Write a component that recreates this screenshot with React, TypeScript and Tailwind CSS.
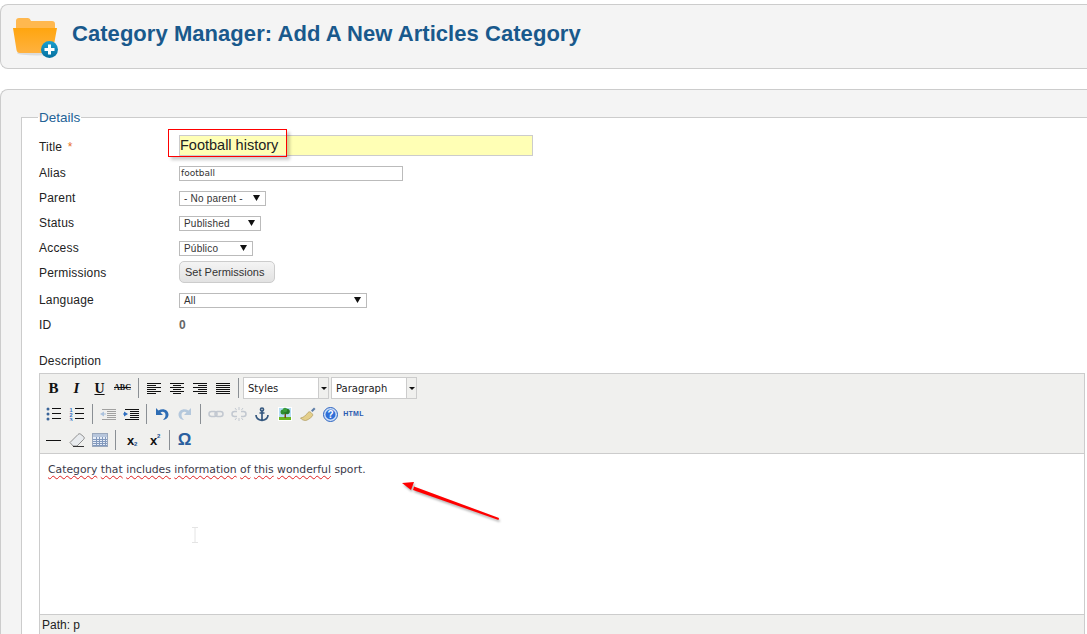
import type { ReactNode } from "react";

const sans = "font-['Liberation_Sans',Arial,sans-serif]";
const serif = "font-['Liberation_Serif',serif]";
const verdana = "font-['DejaVu_Sans',Verdana,sans-serif]";

function FolderIcon() {
  return (
    <svg width="48" height="44" viewBox="0 0 48 44" className="shrink-0">
      <defs>
        <linearGradient id="folderFront" x1="0" y1="0" x2="0" y2="1">
          <stop offset="0" stopColor="#ffa50f" />
          <stop offset="1" stopColor="#ffb23f" />
        </linearGradient>
        <linearGradient id="badge" x1="0" y1="0" x2="0" y2="1">
          <stop offset="0" stopColor="#1aa0d0" />
          <stop offset="1" stopColor="#05709f" />
        </linearGradient>
      </defs>
      <ellipse cx="25" cy="38" rx="20" ry="2.5" fill="#dcdcdc" />
      <path d="M4 6 q0-3 3-3 h9 q2 0 3 3 h21 q3 0 3 3 v5 H4z" fill="#ffb84f" />
      <path d="M1 13 h44 l-4 22 q-.5 3-3 3 H8 q-3 0-3.5-3z" fill="url(#folderFront)" />
      <circle cx="37.5" cy="34.5" r="8.5" fill="url(#badge)" />
      <path d="M36 29.5 h3 v3.5 h3.5 v3 H39 v3.5 h-3 V36 h-3.5 v-3 H36z" fill="#fff" />
    </svg>
  );
}

function Row({ label, className, children }: { label: ReactNode; className: string; children: ReactNode }) {
  return (
    <div className={`flex h-[22px] items-center ${className}`}>
      <div className="w-[140px] text-[12px] tracking-[0.2px] text-[#222]">{label}</div>
      {children}
    </div>
  );
}

function SelectBox({ width, text }: { width: string; text: string }) {
  return (
    <div className={`flex h-[15px] items-center justify-between border border-[#bbb] bg-white pl-[4px] pr-[5px] text-[10px] tracking-[0.2px] text-[#333] ${width}`}>
      <span>{text}</span>
      <svg width="7" height="6" viewBox="0 0 7 6"><path d="M0 0h7L3.500 6z" fill="#111" /></svg>
    </div>
  );
}

function Btn({ children }: { children: ReactNode }) {
  return <div className="flex h-[20px] w-[23px] shrink-0 items-center justify-center">{children}</div>;
}

function Sep({ wide }: { wide?: boolean }) {
  return (
    <div className={`flex h-[20px] shrink-0 justify-center ${wide ? "w-[9px]" : "w-[8px]"}`}>
      <div className="h-full w-px bg-[#8a8f94]" />
    </div>
  );
}

function Lines({ rows }: { rows: [number, number][] }) {
  return (
    <svg width="14" height="11" viewBox="0 0 14 11">
      {rows.map(([x, w], i) => (
        <rect key={i} x={x} y={i * 2} width={w} height="1" fill="#111" />
      ))}
    </svg>
  );
}

const alignLeft: [number, number][] = [[0, 14], [0, 9], [0, 14], [0, 9], [0, 14], [0, 9]];
const alignCenter: [number, number][] = [[0, 14], [3, 8], [0, 14], [3, 8], [0, 14], [3, 8]];
const alignRight: [number, number][] = [[0, 14], [5, 9], [0, 14], [5, 9], [0, 14], [5, 9]];
const alignFull: [number, number][] = [[0, 14], [0, 14], [0, 14], [0, 14], [0, 14], [0, 14]];

function ListIcon({ numbered }: { numbered?: boolean }) {
  return (
    <svg width="15" height="14" viewBox="0 0 15 14">
      {["1", "2", "3"].map((n, i) =>
        numbered ? (
          <text key={n} x="0.500" y={i * 5 + 4.500} fontSize="5.500" fontWeight="700" fontFamily="Liberation Sans" fill="#2f6fc0">
            {n}
          </text>
        ) : (
          <circle key={n} cx="2" cy={i * 5 + 2} r="1.500" fill="#3a6498" />
        ),
      )}
      {[1, 6, 11].map((y) => (
        <rect key={y} x="6" y={y} width="9" height="1" fill="#111" />
      ))}
    </svg>
  );
}

function IndentIcon({ faded, out }: { faded?: boolean; out?: boolean }) {
  return (
    <svg width="16" height="11" viewBox="0 0 16 11" className={faded ? "opacity-35" : ""}>
      {[0, 2, 4, 6, 8, 10].map((y, i) => (
        <rect key={y} x={i === 0 || i === 5 ? 2 : 7} y={y} width={i === 0 || i === 5 ? 14 : 9} height="1" fill="#111" />
      ))}
      <path d={out ? "M0 5 L4 2.500v5z" : "M5 5 L1 2.500v5z"} fill="#2f6fc0" />
      <rect x={out ? 3 : 0} y="4.500" width="3" height="1" fill="#2f6fc0" />
    </svg>
  );
}

function UndoIcon({ redo }: { redo?: boolean }) {
  return (
    <svg width="14" height="14" viewBox="0 0 14 14" className={redo ? "-scale-x-100 opacity-30" : ""}>
      <path d="M1 1v7h7L5.500 5.500C7.500 4 10.500 5 10.500 8c0 2-1 3.500-2.500 5 4-.5 5.500-3 5.500-5.500C13.500 3 8 .5 3.500 3.500z" fill="#2e6db4" />
    </svg>
  );
}

function LinkIcon({ broken }: { broken?: boolean }) {
  return (
    <svg width="16" height="14" viewBox="0 0 16 14" fill="none" stroke="#c2c8d0" strokeWidth="1.500">
      {broken ? (
        <>
          <path d="M6 4.500H3.500a2.500 2.500 0 0 0 0 5H6M10 4.500h2.500a2.500 2.500 0 0 1 0 5H10" />
          <path d="M8 0v3M8 11v3M4 1l1.500 2M12 1l-1.500 2M4 13l1.500-2M12 13l-1.500-2" strokeWidth="1" />
        </>
      ) : (
        <>
          <rect x="1" y="4.500" width="8" height="5" rx="2.500" />
          <rect x="7" y="4.500" width="8" height="5" rx="2.500" />
        </>
      )}
    </svg>
  );
}

function AnchorIcon() {
  return (
    <svg width="14" height="15" viewBox="0 0 14 15" fill="none" stroke="#35587f" strokeWidth="1.700">
      <circle cx="7" cy="2.500" r="1.500" />
      <path d="M7 4v9.500M4.500 6h5M1 8c0 3.500 3 5 6 5.500 3-.5 6-2 6-5.500" />
    </svg>
  );
}

function ImageIcon() {
  return (
    <svg width="14" height="14" viewBox="0 0 14 14">
      <rect width="14" height="14" fill="#fff" />
      <rect x="1" y="1" width="12" height="9" fill="#b4dcf4" />
      <rect x="1" y="10" width="12" height="3" fill="#6ab51f" />
      <rect x="6.500" y="6" width="1.500" height="5" fill="#7a4a1a" />
      <circle cx="5" cy="5" r="2.500" fill="#2f8f2f" />
      <circle cx="9" cy="4.500" r="2.800" fill="#277a27" />
      <circle cx="7" cy="3" r="2.200" fill="#3b9e3b" />
    </svg>
  );
}

function BrushIcon() {
  return (
    <svg width="16" height="14" viewBox="0 0 16 14">
      <path d="M11 3.500 14 .5l1.500 1.500L12.500 5z" fill="#5f7fa8" />
      <path d="M.5 11C4 10.500 6 8 8 5.500c1-1 2-1 3 0l1 1c1 1 1 2 0 3-2 2-5 4-6.500 4-2 0-4-1-5-2.500z" fill="#e4cf8b" stroke="#a58f4f" strokeWidth=".6" />
    </svg>
  );
}

function HelpIcon() {
  return (
    <svg width="15" height="15" viewBox="0 0 15 15">
      <circle cx="7.500" cy="7.500" r="7" fill="#cfe0f7" stroke="#2c63c0" />
      <circle cx="7.500" cy="7.500" r="5" fill="#2f6fd8" />
      <text x="7.500" y="11" textAnchor="middle" fontSize="10" fontWeight="700" fontFamily="Liberation Sans" fill="#fff">?</text>
    </svg>
  );
}

function EraserIcon() {
  return (
    <svg width="16" height="14" viewBox="0 0 16 14">
      <path d="M1 9.500 9 1.500c1-1 2-1 3 0l2.500 2c1 1 1 2 0 3L8 13H4z" fill="#e8ebee" stroke="#777" strokeWidth=".8" />
      <path d="M4 13.500h11" stroke="#333" />
    </svg>
  );
}

function TableIcon() {
  return (
    <svg width="16" height="14" viewBox="0 0 16 14">
      <rect x=".5" y=".5" width="15" height="13" fill="#e6edf8" stroke="#9aa8bd" />
      <rect x="1" y="1" width="14" height="3" fill="#b7c6dc" />
      {[4, 7, 10, 13].map((x) => <path key={x} d={`M${x + 0.5} 4v9`} stroke="#8299bd" />)}
      {[6, 8, 10, 12].map((y) => <path key={y} d={`M1 ${y + 0.5}h14`} stroke="#8299bd" />)}
    </svg>
  );
}

function Script({ sup }: { sup?: boolean }) {
  return (
    <div className={`relative text-[13px] font-bold leading-none text-[#111] ${sans}`}>
      x
      <span className={`absolute left-full text-[6px] leading-none text-[#1b4f8f] ${sup ? "-top-[1px]" : "bottom-0"}`}>2</span>
    </div>
  );
}

function Dropdown({ text }: { text: string }) {
  return (
    <div className={`flex h-[22px] w-[86px] shrink-0 border border-[#ccc] bg-white text-[10px] text-[#222] ${verdana}`}>
      <div className="flex flex-1 items-center pl-[4px]">{text}</div>
      <div className="flex w-[10px] items-center justify-center border-l border-[#ccc] bg-[#f0f0ee]">
        <svg width="6" height="3" viewBox="0 0 6 3"><path d="M0 0h6L3 3z" fill="#111" /></svg>
      </div>
    </div>
  );
}

function Word({ children }: { children: string }) {
  return <span className="underline decoration-[#e02020] decoration-wavy decoration-1 underline-offset-2">{children}</span>;
}

export default function App() {
  return (
    <div className={`relative h-[634px] w-[1087px] overflow-hidden bg-white pt-[4px] ${sans}`}>
      <header className="flex h-[65px] items-center gap-[12px] rounded-l-lg border border-r-0 border-[#ccc] bg-[#f4f4f4] pl-[11px]">
        <FolderIcon />
        <h1 className="-mt-[6px] text-[22px] font-bold tracking-[0.05px] text-[#19598c]">Category Manager: Add A New Articles Category</h1>
      </header>

      <main className="mt-[20px] h-[560px] rounded-l-lg border border-r-0 border-[#ccc] bg-[#f4f4f4] pl-[20px] pt-[20px]">
        <fieldset className="h-[600px] border border-r-0 border-[#ccc] bg-white pl-[17px]">
          <legend className="-ml-[1px] px-[1px] text-[13.500px] font-medium leading-[15px] text-[#236296]">Details</legend>

          <Row label={<span className="block pt-[2px]">Title <span className="ml-[2px] text-[#e8702a]">*</span></span>} className="mt-[10px]">
            <div className="flex h-[21px] w-[354px] items-center self-start border border-[#ccc] bg-[#ffffb5] pt-[1px] text-[14.500px] text-[#222]">Football history</div>
          </Row>
          <Row label="Alias" className="mt-[5px]">
            <div className={`flex h-[15px] w-[224px] items-center border border-[#bbb] pl-[1px] pt-[1px] text-[9px] text-[#333] ${verdana}`}>football</div>
          </Row>
          <Row label="Parent" className="mt-[3px]"><SelectBox width="w-[87px]" text="- No parent -" /></Row>
          <Row label="Status" className="mt-[3px]"><SelectBox width="w-[82px]" text="Published" /></Row>
          <Row label="Access" className="mt-[3px]"><SelectBox width="w-[74px]" text="Público" /></Row>
          <Row label={<span className="block pt-[2px]">Permissions</span>} className="mt-[2px]">
            <div className="flex h-[22px] w-[96px] items-center rounded-[5px] border border-[#ccc] bg-gradient-to-b from-[#f4f4f4] to-[#e2e2e2] pl-[5px] text-[11px] text-[#333]">Set Permissions</div>
          </Row>
          <Row label="Language" className="mt-[6px]"><SelectBox width="w-[188px]" text="All" /></Row>
          <Row label="ID" className="mt-[3px]"><span className="text-[12px] font-bold text-[#666]">0</span></Row>
          <div className="mt-[18px] text-[12px] leading-[14px] tracking-[0.2px] text-[#222]">Description</div>

          <section className="mr-[2px] mt-[5px] flex h-[262px] flex-col border border-[#ccc]">
            <div className="flex h-[80px] flex-col gap-[6px] border-b border-[#ccc] bg-[#f0f0ee] pl-[2px] pt-[3px]">
              <div className="flex h-[22px] items-center">
                <Btn><span className={`text-[15px] font-bold text-[#111] ${serif}`}>B</span></Btn>
                <Btn><span className={`text-[15px] font-bold italic text-[#111] ${serif}`}>I</span></Btn>
                <Btn><span className={`text-[14px] font-bold text-[#111] underline ${serif}`}>U</span></Btn>
                <Btn><span className={`text-[8px] font-bold text-[#111] line-through ${serif}`}>ABC</span></Btn>
                <Sep />
                <Btn><Lines rows={alignLeft} /></Btn>
                <Btn><Lines rows={alignCenter} /></Btn>
                <Btn><Lines rows={alignRight} /></Btn>
                <Btn><Lines rows={alignFull} /></Btn>
                <Sep wide />
                <Dropdown text="Styles" />
                <div className="w-[2px]" />
                <Dropdown text="Paragraph" />
              </div>
              <div className="-mt-[1px] flex h-[20px] items-center">
                <Btn><ListIcon /></Btn>
                <Btn><ListIcon numbered /></Btn>
                <Sep />
                <Btn><IndentIcon faded out /></Btn>
                <Btn><IndentIcon /></Btn>
                <Sep />
                <Btn><UndoIcon /></Btn>
                <Btn><UndoIcon redo /></Btn>
                <Sep />
                <Btn><LinkIcon /></Btn>
                <Btn><LinkIcon broken /></Btn>
                <Btn><AnchorIcon /></Btn>
                <Btn><ImageIcon /></Btn>
                <Btn><BrushIcon /></Btn>
                <Btn><HelpIcon /></Btn>
                <Btn><span className={`text-[7px] font-bold tracking-[0.3px] text-[#2a5ab0] ${sans}`}>HTML</span></Btn>
              </div>
              <div className="flex h-[20px] items-center">
                <Btn><div className="h-[1px] w-[15px] bg-[#111]" /></Btn>
                <Btn><EraserIcon /></Btn>
                <Btn><TableIcon /></Btn>
                <Sep />
                <Btn><Script /></Btn>
                <Btn><Script sup /></Btn>
                <Sep />
                <Btn><span className={`text-[17px] font-bold text-[#2a5f9f] ${sans}`}>Ω</span></Btn>
              </div>
            </div>
            <div className={`h-[160px] bg-white pl-[8px] pt-[8px] text-[10.800px] leading-[16px] text-[#3a3a4a] ${verdana}`}>
              <Word>Category</Word> <Word>that</Word> <Word>includes</Word> <Word>information</Word> <Word>of</Word> <Word>this</Word> <Word>wonderful</Word> sport.
            </div>
            <div className="h-[20px] border-t border-[#ccc] bg-[#f0f0ee] pl-[2px] pt-[2px] text-[12px] leading-[16px] text-[#222]">Path: p</div>
          </section>
        </fieldset>
      </main>

      {/* red annotations drawn on top of the screenshot */}
      <div className="absolute left-[168px] top-[129px] h-[28px] w-[119px] border border-[#f00] shadow-[3px_3px_3px_rgba(0,0,0,0.2)]" />
      <svg width="110" height="50" viewBox="0 0 110 50" className="absolute left-[398px] top-[478px] drop-shadow-[1px_2px_1px_rgba(0,0,0,0.3)]">
        <path d="M101 40 16 8.500 15 12 100.500 42z" fill="#f00" />
        <path d="M4 5 16 4 13 12z" fill="#f00" />
      </svg>
      <svg width="6" height="16" viewBox="0 0 6 16" className="absolute left-[192px] top-[527px]">
        <path d="M0 .5h6M0 15.500h6M3 .5v15" stroke="#e4e4e4" />
      </svg>
    </div>
  );
}
